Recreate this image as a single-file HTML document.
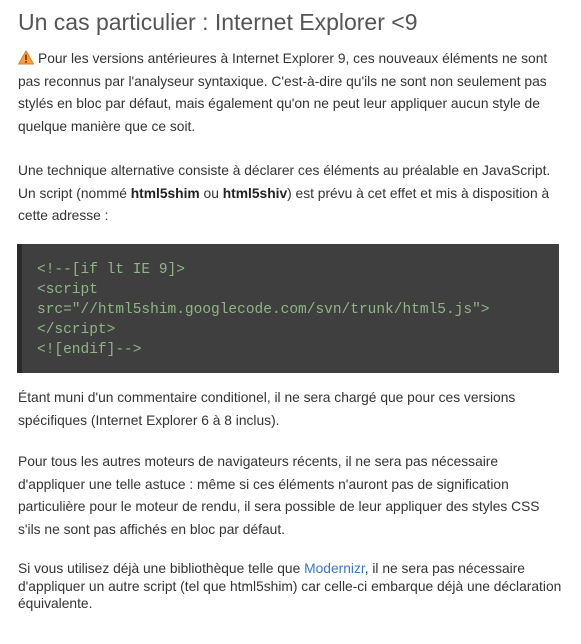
<!DOCTYPE html>
<html><head><meta charset="utf-8">
<style>
html,body{margin:0;padding:0;background:#fff;width:581px;height:644px;overflow:hidden}
body{font-family:"Liberation Sans",Arial,sans-serif;color:#333;font-size:13.8px}
h2{position:absolute;left:18px;top:5px;margin:0;font-weight:normal;font-size:23px;color:#555;line-height:34px;white-space:nowrap}
.p{position:absolute;left:18px;margin:0;line-height:22.5px;white-space:nowrap}
b{font-weight:bold;color:#222}
a{color:#3a78c3;text-decoration:none}
.code{position:absolute;left:17px;top:244px;width:537px;height:129px;background:#3f3f3f;border-left:5px solid #2a2a2a}
.code pre{margin:0;position:absolute;left:15px;top:16px;font-family:"Liberation Mono",monospace;font-size:14.5px;line-height:20px;color:#90b585;font-weight:normal}
</style></head><body>
<h2>Un cas particulier : Internet Explorer &lt;9</h2>
<div class="p" style="top:48px"><svg width="16" height="15" viewBox="0 0 16 15" style="vertical-align:-2px;margin-right:4px"><path d="M8 0.8 L15.4 14 L0.6 14 Z" fill="#f2a33a" stroke="#d9822b" stroke-width="1" stroke-linejoin="round"/><rect x="7" y="4.5" width="2" height="5.5" fill="#b0271b"/><rect x="7" y="11" width="2" height="1.8" fill="#b0271b"/></svg>Pour les versions antérieures à Internet Explorer 9, ces nouveaux éléments ne sont<br>pas reconnus par l'analyseur syntaxique. C'est-à-dire qu'ils ne sont non seulement pas<br>stylés en bloc par défaut, mais également qu'on ne peut leur appliquer aucun style de<br>quelque manière que ce soit.</div>
<div class="p" style="top:160px">Une technique alternative consiste à déclarer ces éléments au préalable en JavaScript.<br>Un script (nommé <b>html5shim</b> ou <b>html5shiv</b>) est prévu à cet effet et mis à disposition à<br>cette adresse :</div>
<div class="code"><pre>&lt;!--[if lt IE 9]&gt;
&lt;script
src="//html5shim.googlecode.com/svn/trunk/html5.js"&gt;
&lt;/script&gt;
&lt;![endif]--&gt;</pre></div>
<div class="p" style="top:386px;line-height:23px">Étant muni d'un commentaire conditionel, il ne sera chargé que pour ces versions<br>spécifiques (Internet Explorer 6 à 8 inclus).</div>
<div class="p" style="top:451px;line-height:22.7px">Pour tous les autres moteurs de navigateurs récents, il ne sera pas nécessaire<br>d'appliquer une telle astuce : même si ces éléments n'auront pas de signification<br>particulière pour le moteur de rendu, il sera possible de leur appliquer des styles CSS<br>s'ils ne sont pas affichés en bloc par défaut.</div>
<div class="p" style="top:560px;line-height:17.5px">Si vous utilisez déjà une bibliothèque telle que <a>Modernizr</a>, il ne sera pas nécessaire<br>d'appliquer un autre script (tel que html5shim) car celle-ci embarque déjà une déclaration<br>équivalente.</div>
</body></html>
